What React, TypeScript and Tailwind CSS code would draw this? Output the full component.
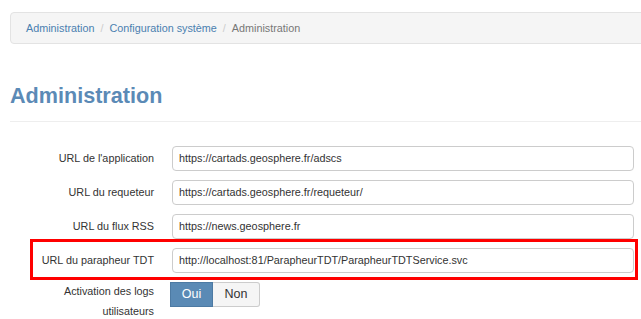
import React from "react";

const rows = [
  { label: "URL de l'application", value: "https://cartads.geosphere.fr/adscs" },
  { label: "URL du requeteur", value: "https://cartads.geosphere.fr/requeteur/" },
  { label: "URL du flux RSS", value: "https://news.geosphere.fr" },
  { label: "URL du parapheur TDT", value: "http://localhost:81/ParapheurTDT/ParapheurTDTService.svc", highlight: true },
];

export default function App() {
  return (
    <div
      className="w-[641px] h-[319px] overflow-hidden bg-white text-[#333]"
      style={{ fontFamily: '"Liberation Sans", Arial, sans-serif' }}
    >
      <div className="pl-[10px] pt-[12px]">
        <div className="w-[660px] h-[32px] flex items-center pl-[15px] bg-[#f5f5f5] border border-[#e3e3e3] rounded-[4px] text-[10.8px]">
          <span className="text-[#4a7fb0]">Administration</span>
          <span className="px-[6px] text-[#ccc]">/</span>
          <span className="text-[#4a7fb0]">Configuration système</span>
          <span className="px-[6px] text-[#ccc]">/</span>
          <span className="text-[#777]">Administration</span>
        </div>

        <h1 className="mt-[40px] text-[21.6px] leading-[24px] font-bold text-[#5b8ab6]">Administration</h1>
        <div className="mt-[13px] h-px w-[660px] bg-[#eee]" />

        <div className="mt-[24px] flex flex-col gap-[9px] text-[10.8px]">
          {rows.map((r) => (
            <div key={r.label} className="relative flex items-center">
              <div className="w-[144px] text-right">{r.label}</div>
              <div className="ml-[18px] w-[462px] h-[25px] flex items-center px-[6px] border border-[#ccc] rounded-[4px] text-[#333]">
                {r.value}
              </div>
              {r.highlight && (
                <div className="absolute left-[20px] top-[-9px] w-[608px] h-[41px] border-[3px] border-[#f00]" />
              )}
            </div>
          ))}
          <div className="flex items-start">
            <div className="w-[144px] text-right leading-[20px] mt-[-1px]">
              Activation des logs
              <br />
              utilisateurs
            </div>
            <div className="ml-[16px] flex">
              <div className="w-[43px] h-[25px] flex items-center justify-center bg-[#5a8ab5] border border-[#4d7aa3] text-white text-[12.5px]">
                Oui
              </div>
              <div className="w-[47px] h-[25px] flex items-center justify-center bg-[#f5f5f5] border border-[#ccc] border-l-0 text-[#333] text-[12.5px] rounded-r-[3px]">
                Non
              </div>
            </div>
          </div>
        </div>
      </div>
    </div>
  );
}
